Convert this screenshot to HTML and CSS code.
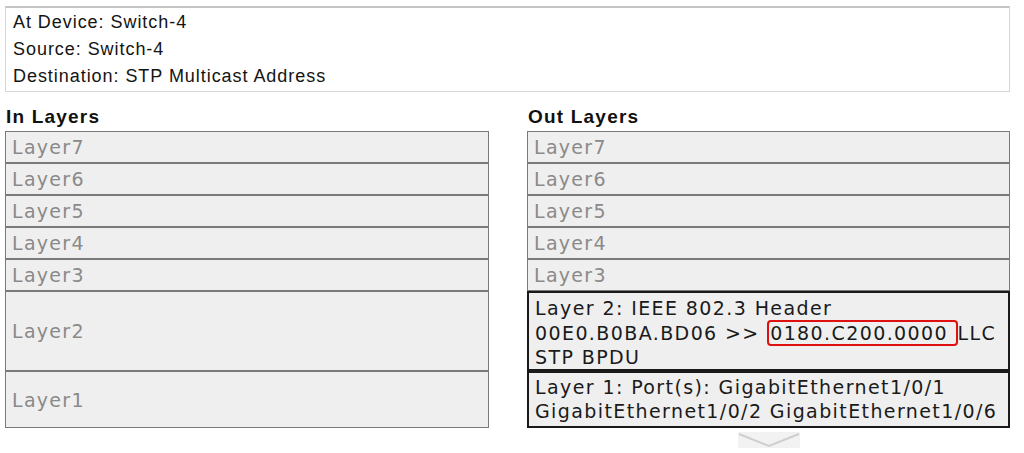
FILE: index.html
```html
<!DOCTYPE html>
<html>
<head>
<meta charset="utf-8">
<link rel="stylesheet" href="styles.css">
</head>
<body>
<div class="page">
  <div class="info">
    <div>At Device: Switch-4</div>
    <div>Source: Switch-4</div>
    <div>Destination: STP Multicast Address</div>
  </div>
  <div class="columns">
    <section class="col">
      <h2 class="col-title">In Layers</h2>
      <div class="layers">
        <div class="layer">Layer7</div>
        <div class="layer">Layer6</div>
        <div class="layer">Layer5</div>
        <div class="layer">Layer4</div>
        <div class="layer">Layer3</div>
        <div class="layer tall2">Layer2</div>
        <div class="layer tall1">Layer1</div>
      </div>
    </section>
    <section class="col">
      <h2 class="col-title">Out Layers</h2>
      <div class="layers">
        <div class="layer">Layer7</div>
        <div class="layer">Layer6</div>
        <div class="layer">Layer5</div>
        <div class="layer">Layer4</div>
        <div class="layer">Layer3</div>
        <div class="layer tall2 active">Layer 2: IEEE 802.3 Header 00E0.B0BA.BD06 &gt;&gt; <span class="mark">0180.C200.0000 </span>LLC STP BPDU</div>
        <div class="layer tall1 active">Layer 1: Port(s): GigabitEthernet1/0/1 GigabitEthernet1/0/2 GigabitEthernet1/0/6</div>
      </div>
      <div class="more">
        <svg width="62" height="16" viewBox="0 0 62 16">
          <rect x="0" y="0" width="62" height="16" fill="#f2f2f2"/>
          <polyline points="1,2 31,14 61,2" fill="none" stroke="#cfcfcf" stroke-width="2"/>
        </svg>
      </div>
    </section>
  </div>
</div>
</body>
</html>
```

FILE: styles.css
```css
html, body {
  margin: 0;
  padding: 0;
  background: #ffffff;
}

.page {
  padding: 6px 14px 0 5px;
}

.info {
  box-sizing: border-box;
  height: 86px;
  border: 1px solid #d6d6d6;
  border-top: 2px solid #c4c4c4;
  padding: 1px 7px;
  font-family: "Liberation Sans", Arial, sans-serif;
  font-size: 18px;
  letter-spacing: 0.95px;
  line-height: 27px;
  color: #141414;
}

.columns {
  display: grid;
  grid-template-columns: 484px 483px;
  column-gap: 38px;
}

.col-title {
  margin: 14px 0 3px 1px;
  font-family: "Liberation Sans", Arial, sans-serif;
  font-weight: bold;
  font-size: 19px;
  letter-spacing: 1.2px;
  line-height: 22px;
  color: #111111;
}

.layers {
  display: flex;
  flex-direction: column;
}

.layer {
  box-sizing: border-box;
  height: 32px;
  border: 1px solid #7a7a7a;
  background: #efefef;
  padding: 0 6px;
  display: flex;
  align-items: center;
  font-family: "DejaVu Sans", Verdana, sans-serif;
  font-size: 19px;
  letter-spacing: 1.3px;
  color: #8a8a8a;
}

.layer.tall2 {
  height: 80px;
}

.layer.tall1 {
  height: 57px;
}

.layer.active {
  display: block;
  border: 2px solid #1a1a1a;
  padding: 3px 4px 0 6px;
  line-height: 24.5px;
  letter-spacing: 1.4px;
  color: #1a1a1a;
}

.layer.tall1.active {
  padding-top: 2px;
  line-height: 24px;
}

.mark {
  border: 2px solid #e01010;
  border-radius: 4px;
  padding: 0 0 0 1px;
}

.more {
  display: flex;
  justify-content: center;
  margin-top: 4px;
}

.more svg {
  display: block;
}
```
